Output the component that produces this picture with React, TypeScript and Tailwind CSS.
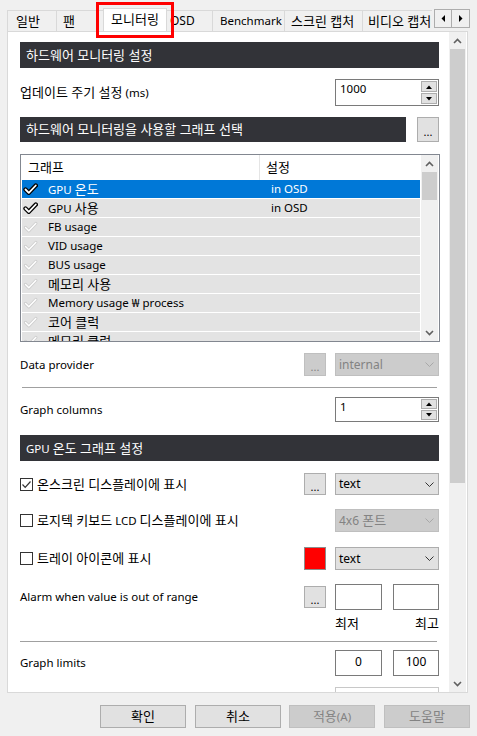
import React from "react";

const rows = [
  { name: "GPU 온도", set: "in OSD", on: true, sel: true },
  { name: "GPU 사용", set: "in OSD", on: true, sel: false },
  { name: "FB usage", set: "", on: false, sel: false },
  { name: "VID usage", set: "", on: false, sel: false },
  { name: "BUS usage", set: "", on: false, sel: false },
  { name: "메모리 사용", set: "", on: false, sel: false },
  { name: "Memory usage ₩ process", set: "", on: false, sel: false },
  { name: "코어 클럭", set: "", on: false, sel: false },
  { name: "메모리 클럭", set: "", on: false, sel: false },
];

// Hangul runs render a bit larger than the latin text, like Malgun Gothic does
function T({ s }: { s: string }) {
  const parts = s.split(/([\u3131-\uD7A3]+(?:\s+[\u3131-\uD7A3]+)*)/);
  return (
    <>
      {parts.map((p, i) =>
        /[\u3131-\uD7A3]/.test(p) ? (
          <span key={i} className="text-[13px]">
            {p}
          </span>
        ) : (
          p
        )
      )}
    </>
  );
}

function Chevron({ up, color = "#606060" }: { up?: boolean; color?: string }) {
  return (
    <svg width="9" height="6" viewBox="0 0 9 6">
      <polyline
        points={up ? "1,5 4.5,1.5 8,5" : "1,1 4.5,4.5 8,1"}
        fill="none"
        stroke={color}
        strokeWidth="1.6"
      />
    </svg>
  );
}

function ListCheck({ on }: { on: boolean }) {
  const d = "M2.5 6.5 L5.8 9.8 L12.8 2.5";
  return (
    <svg width="15" height="12" viewBox="0 0 15 12">
      <path d={d} fill="none" stroke={on ? "#000" : "#cfcfcf"} strokeWidth={on ? 4.4 : 3.2} strokeLinecap="round" strokeLinejoin="round" />
      <path d={d} fill="none" stroke="#fff" strokeWidth={on ? 1.8 : 1.4} strokeLinecap="round" strokeLinejoin="round" />
    </svg>
  );
}

function Tri({ up }: { up?: boolean }) {
  return (
    <svg width="6" height="4" viewBox="0 0 6 4">
      <polygon points={up ? "0,4 3,0.5 6,4" : "0,0 3,3.5 6,0"} fill="#000" />
    </svg>
  );
}

function Spin({ value, tall }: { value: string; tall?: boolean }) {
  return (
    <div className={`flex w-[104px] border border-[#7a7a7a] bg-white ${tall ? "h-[27px]" : "h-[25px]"}`}>
      <div className="flex-1 pl-[4px] pt-[3px]">{value}</div>
      <div className="flex w-[17px] flex-col gap-[1px] pr-[1px] pt-[1px] pb-[1px]">
        <div className="flex flex-1 items-center justify-center border border-[#adadad] bg-[#e1e1e1]">
          <Tri up />
        </div>
        <div className="flex flex-1 items-center justify-center border border-[#adadad] bg-[#e1e1e1]">
          <Tri />
        </div>
      </div>
    </div>
  );
}

function Dots({ disabled, h = "h-[22px]" }: { disabled?: boolean; h?: string }) {
  return (
    <div
      className={`flex w-[22px] items-center justify-center border text-[11px] ${h} ${
        disabled ? "border-[#bfbfbf] bg-[#cccccc] text-[#838383]" : "border-[#adadad] bg-[#e1e1e1] text-black"
      }`}
    >
      <span className="pt-[4px]">...</span>
    </div>
  );
}

function Select({ label, disabled, h = "h-[23px]" }: { label: string; disabled?: boolean; h?: string }) {
  return (
    <div
      className={`flex w-[104px] items-center justify-between border pl-[3px] pr-[4px] ${h} ${
        disabled ? "border-[#bfbfbf] bg-[#cccccc] text-[#838383]" : "border-[#adadad] bg-[#e1e1e1] text-black"
      }`}
    >
      <span className="text-[12px]">
        <T s={label} />
      </span>
      <svg width="9" height="5" viewBox="0 0 9 5">
        <polyline points="0.5,0.5 4.5,4.5 8.5,0.5" fill="none" stroke={disabled ? "#a8a8a8" : "#333"} strokeWidth="1" />
      </svg>
    </div>
  );
}

function CheckBox({ on }: { on?: boolean }) {
  return (
    <div className="flex h-[13px] w-[13px] items-center justify-center border border-[#333333] bg-white">
      {on && (
        <svg width="11" height="11" viewBox="0 0 11 11">
          <polyline points="1.5,5.5 4.2,8.3 9.5,2.5" fill="none" stroke="#333" strokeWidth="1.2" />
        </svg>
      )}
    </div>
  );
}

function Header({ text, w = "w-full", h = "h-[26px]" }: { text: string; w?: string; h?: string }) {
  return (
    <div className={`flex items-center bg-[#323338] pl-[6px] text-white ${w} ${h}`}>
      <span>
        <T s={text} />
      </span>
    </div>
  );
}

function Tab({ text, w, pl }: { text: string; w: string; pl: string }) {
  return (
    <div className={`flex h-[21px] shrink-0 items-center border-t border-l border-[#d9d9d9] bg-[#f0f0f0] ${w} ${pl}`}>
      <span className="whitespace-nowrap">
        <T s={text} />
      </span>
    </div>
  );
}

function TabStrip() {
  return (
    <div className="flex h-[31px] pl-[7px]">
      <div className="flex w-[425px] items-end overflow-hidden">
        <Tab text="일반" w="w-[49px]" pl="pl-[8px]" />
        <Tab text="팬" w="w-[47px]" pl="pl-[6px]" />
        <div className="relative z-10 -mb-px flex h-[24px] w-[64px] shrink-0 items-center justify-center border border-b-0 border-[#d9d9d9] bg-white pb-[2px]">
          <T s="모니터링" />
        </div>
        <div className="flex h-[21px] w-[45px] shrink-0 items-center border-t border-[#d9d9d9] bg-[#f0f0f0] pl-[3px] text-[12px]">
          OSD
        </div>
        <Tab text="Benchmark" w="w-[72px]" pl="pl-[7px]" />
        <Tab text="스크린 캡처" w="w-[78px]" pl="pl-[6px]" />
        <Tab text="비디오 캡처" w="w-[72px]" pl="pl-[5px]" />
      </div>
      <div className="mt-[9px] ml-[2px] flex h-[19px] border border-[#adadad] bg-[#f0f0f0]">
        <div className="flex w-[17px] items-center justify-center border-r border-[#adadad]">
          <svg width="4" height="7" viewBox="0 0 4 7">
            <polygon points="4,0 0.5,3.5 4,7" fill="#000" />
          </svg>
        </div>
        <div className="flex w-[17px] items-center justify-center">
          <svg width="4" height="7" viewBox="0 0 4 7">
            <polygon points="0,0 3.5,3.5 0,7" fill="#000" />
          </svg>
        </div>
      </div>
    </div>
  );
}

function GraphList() {
  return (
    <div className="mt-[12px] flex h-[188px] w-[420px] border border-[#828790] bg-white">
      <div className="flex flex-1 flex-col overflow-hidden">
        <div className="flex h-[25px] shrink-0 items-center">
          <div className="flex h-full w-[239px] items-center border-r border-[#e5e5e5] pl-[7px]">
            <T s="그래프" />
          </div>
          <div className="pl-[6px]">
            <T s="설정" />
          </div>
        </div>
        <div className="px-[1px]">
          {rows.map((r) => (
            <div
              key={r.name}
              className={`mb-px flex h-[18px] items-center ${r.sel ? "bg-[#0078d7] text-white" : "bg-[#e3e3e3]"}`}
            >
              <div className="flex w-[26px] justify-start pl-[1px]">
                <ListCheck on={r.on} />
              </div>
              <div className="w-[223px] whitespace-nowrap">
                <T s={r.name} />
              </div>
              <div>{r.set}</div>
            </div>
          ))}
        </div>
      </div>
      <div className="mr-[1px] flex w-[17px] flex-col bg-[#f0f0f0]">
        <div className="flex h-[17px] items-center justify-center">
          <Chevron up />
        </div>
        <div className="mx-[1px] h-[28px] bg-[#cdcdcd]" />
        <div className="flex-1" />
        <div className="flex h-[17px] items-center justify-center">
          <Chevron />
        </div>
      </div>
    </div>
  );
}

function Panel() {
  return (
    <div className="mx-[7px] flex h-[662px] w-[461px] border border-[#d9d9d9] bg-white">
      <div className="flex-1 overflow-hidden pt-[10px] pl-[12px] pr-[10px]">
        <Header text="하드웨어 모니터링 설정" />
        <div className="mt-[11px] flex h-[27px] items-center justify-between">
          <span>
            <T s="업데이트 주기 설정 (ms)" />
          </span>
          <Spin value="1000" tall />
        </div>
        <div className="mt-[11px] flex items-center justify-between">
          <Header text="하드웨어 모니터링을 사용할 그래프 선택" w="w-[386px]" h="h-[25px]" />
          <Dots h="h-[25px]" />
        </div>
        <GraphList />
        <div className="mt-[11px] flex h-[23px] items-center">
          <span>Data provider</span>
          <div className="ml-auto">
            <Dots disabled h="h-[23px]" />
          </div>
          <div className="ml-[9px]">
            <Select label="internal" disabled />
          </div>
        </div>
        <div className="mx-[2px] mt-[11px] h-px bg-[#a0a0a0]" />
        <div className="mt-[9px] flex h-[25px] items-center justify-between">
          <span>Graph columns</span>
          <Spin value="1" />
        </div>
        <div className="mt-[13px]">
          <Header text="GPU 온도 그래프 설정" />
        </div>
        <div className="mt-[12px] flex h-[22px] items-center">
          <CheckBox on />
          <span className="ml-[4px]">
            <T s="온스크린 디스플레이에 표시" />
          </span>
          <div className="ml-auto">
            <Dots h="h-[22px]" />
          </div>
          <div className="ml-[9px]">
            <Select label="text" h="h-[22px]" />
          </div>
        </div>
        <div className="mt-[14px] flex h-[23px] items-center">
          <CheckBox />
          <span className="ml-[4px]">
            <T s="로지텍 키보드 LCD 디스플레이에 표시" />
          </span>
          <div className="ml-auto">
            <Select label="4x6 폰트" disabled />
          </div>
        </div>
        <div className="mt-[15px] flex h-[23px] items-center">
          <CheckBox />
          <span className="ml-[4px]">
            <T s="트레이 아이콘에 표시" />
          </span>
          <div className="ml-auto h-[23px] w-[22px] border border-[#8c8c8c] bg-[#ff0000]" />
          <div className="ml-[9px]">
            <Select label="text" />
          </div>
        </div>
        <div className="mt-[14px] flex h-[26px] items-center">
          <span>Alarm when value is out of range</span>
          <div className="ml-auto">
            <Dots h="h-[22px]" />
          </div>
          <div className="ml-[9px] h-[26px] w-[47px] border border-[#7a7a7a] bg-white" />
          <div className="ml-[11px] h-[26px] w-[46px] border border-[#7a7a7a] bg-white" />
        </div>
        <div className="mt-[5px] flex h-[16px] items-center">
          <span className="ml-auto flex w-[104px] justify-between">
            <T s="최저" />
            <T s="최고" />
          </span>
        </div>
        <div className="mt-[10px] mr-[2px] h-px bg-[#a0a0a0]" />
        <div className="mt-[8px] flex h-[26px] items-center">
          <span>Graph limits</span>
          <div className="ml-auto flex h-[26px] w-[47px] items-center justify-center border border-[#7a7a7a] bg-white pb-[2px] text-[12px]">
            0
          </div>
          <div className="ml-[11px] flex h-[26px] w-[46px] items-center justify-center border border-[#7a7a7a] bg-white pb-[2px] text-[12px]">
            100
          </div>
        </div>
        <div className="mt-[11px] flex">
          <div className="ml-auto h-[26px] w-[104px] border border-[#c8c8c8] bg-white" />
        </div>
      </div>
      <div className="mr-[1px] flex w-[17px] flex-col bg-[#f0f0f0]">
        <div className="flex h-[17px] items-center justify-center">
          <Chevron up />
        </div>
        <div className="mx-[1px] h-[434px] bg-[#cdcdcd]" />
        <div className="flex-1" />
        <div className="flex h-[17px] items-center justify-center">
          <Chevron />
        </div>
      </div>
    </div>
  );
}

function Btn({ text, disabled, ml }: { text: string; disabled?: boolean; ml: string }) {
  return (
    <div
      className={`flex h-[23px] w-[86px] items-center justify-center border ${ml} ${
        disabled ? "border-[#bfbfbf] bg-[#cccccc] text-[#838383]" : "border-[#adadad] bg-[#e1e1e1] text-black"
      }`}
    >
      <span>
        <T s={text} />
      </span>
    </div>
  );
}

export default function App() {
  return (
    <div className="relative h-[736px] w-[477px] overflow-hidden bg-[#f0f0f0] font-['Noto_Sans','Noto_Sans_CJK_KR',sans-serif] text-[11.5px] leading-none text-black">
      <TabStrip />
      <Panel />
      <div className="mt-[12px] flex pl-[100px]">
        <Btn text="확인" ml="ml-0" />
        <Btn text="취소" ml="ml-[9px]" />
        <Btn text="적용(A)" disabled ml="ml-[8px]" />
        <Btn text="도움말" disabled ml="ml-[9px]" />
      </div>
      <div className="pointer-events-none absolute top-[2px] left-[96px] h-[36px] w-[78px] border-[3px] border-[#ff0000]" />
    </div>
  );
}
